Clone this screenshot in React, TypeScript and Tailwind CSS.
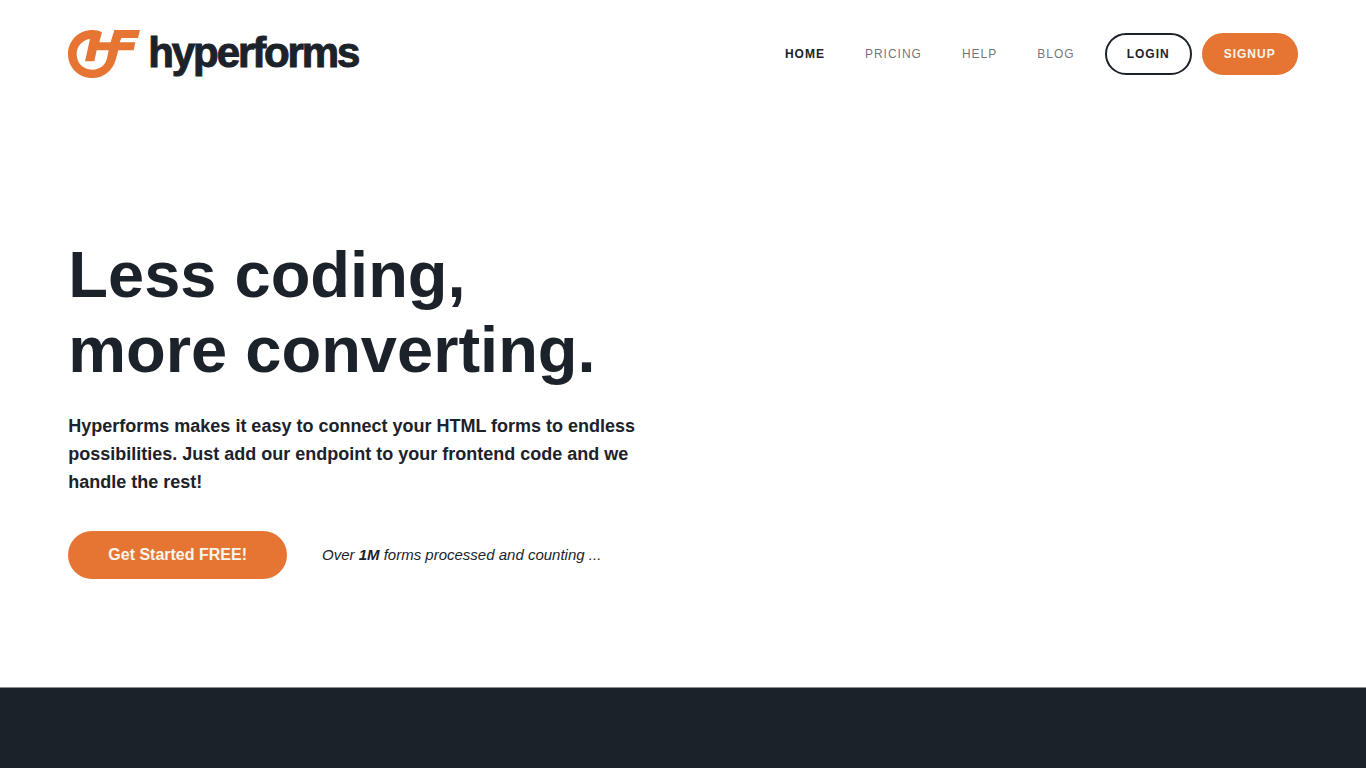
import clsx from "clsx";

const links = [
  { label: "Home", active: true },
  { label: "Pricing", active: false },
  { label: "Help", active: false },
  { label: "Blog", active: false },
];

function Logo() {
  return (
    <a href="#" aria-label="hyperforms" className="flex items-center gap-2">
      <svg viewBox="24 30 216 144" className="h-12 w-[72px]" fill="#e67534">
        <path d="M126 37C117 32 108 30 98 30C57 30 24 61 24 102C24 143 56 174 97 174C132 174 159 151 168 116L175 91H221L226 67H179L184 54H234L240 30H163L152 67H118ZM90 57L75 124H103L110 91H146L141 115C136 136 120 149 97 149C69 149 50 129 50 102C50 79 67 60 90 57Z" />
      </svg>
      <span className="pb-0.5 text-[42px] leading-12 font-bold tracking-tighter [-webkit-text-stroke:1px_#1c2229]">
        hyperforms
      </span>
    </a>
  );
}

function Header() {
  return (
    <header className="mx-auto flex h-[78px] w-[90%] items-center justify-between pt-[30px]">
      <Logo />
      <nav className="flex items-center text-xs tracking-[1px] uppercase">
        <div className="mr-[30px] flex gap-10">
          {links.map((link) => (
            <a
              key={link.label}
              href="#"
              className={clsx(link.active ? "font-bold" : "text-[#1c2229]/65")}
            >
              {link.label}
            </a>
          ))}
        </div>
        <a
          href="#"
          className="mr-2.5 rounded-full border-2 border-[#1c2229] px-5 py-[11px] font-bold"
        >
          Login
        </a>
        <a
          href="#"
          className="rounded-full border-2 border-[#e67534] bg-[#e67534] px-5 py-[11px] font-bold text-[#f5f5eb]"
        >
          Signup
        </a>
      </nav>
    </header>
  );
}

function Hero() {
  return (
    <section className="mx-auto w-[90%] pt-[159px] pb-[108px]">
      <h1 className="text-[65px] leading-[75px] font-bold">
        Less coding,
        <br />
        more converting.
      </h1>
      <p className="mt-[25px] max-w-[590px] text-lg leading-7 font-bold">
        Hyperforms makes it easy to connect your HTML forms to endless possibilities. Just add our
        endpoint to your frontend code and we handle the rest!
      </p>
      <div className="mt-[35px] flex items-center gap-[35px]">
        <button
          type="button"
          className="cursor-pointer rounded-full bg-[#e67534] px-10 py-3 text-base font-bold text-[#f5f5eb]"
        >
          Get Started FREE!
        </button>
        <p className="text-[15px] italic">
          Over <b>1M</b> forms processed and counting ...
        </p>
      </div>
    </section>
  );
}

function App() {
  return (
    <div className="flex min-h-screen flex-col bg-white font-['Liberation_Sans',Arial,sans-serif] text-[#1c2229]">
      <Header />
      <Hero />
      <section className="grow border-t border-[#8d8d8d] bg-[#1c2229]" />
    </div>
  );
}

export default App;
